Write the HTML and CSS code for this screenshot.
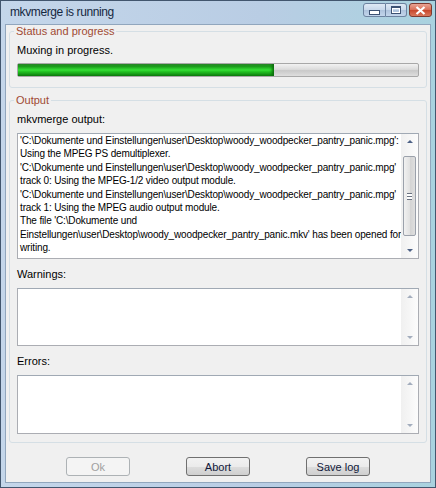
FILE: index.html
```html
<!DOCTYPE html>
<html>
	<head>
		<title>mkvmerge is running</title>
		<link rel="stylesheet" href="styles.css">
	</head>
	<body>
		<div class="window">
			<div class="titlebar">
				<span class="title">mkvmerge is running</span>
				<div class="captionBtns">
					<div class="capBtn minBtn"><span class="minGlyph"></span></div>
					<div class="capBtn maxBtn"><span class="maxGlyph"></span></div>
					<div class="capBtn closeBtn">
						<svg width="11" height="9" viewBox="0 0 11 9">
							<path d="M1.5 1 L9.5 8 M9.5 1 L1.5 8" stroke="#fff" stroke-width="2.2" fill="none"/>
						</svg>
					</div>
				</div>
			</div>
			<div class="client">
				<fieldset class="group groupStatus">
					<legend>Status and progress</legend>
					<div class="label">Muxing in progress.</div>
					<div class="progress"><div class="progressFill" style="width: 64%"></div></div>
				</fieldset>
				<fieldset class="group groupOutput">
					<legend>Output</legend>
					<div class="label">mkvmerge output:</div>
					<div class="textBox outputBox">
						<div class="textLines">
							<div>'C:\Dokumente und Einstellungen\user\Desktop\woody_woodpecker_pantry_panic.mpg':</div>
							<div>Using the MPEG PS demultiplexer.</div>
							<div>'C:\Dokumente und Einstellungen\user\Desktop\woody_woodpecker_pantry_panic.mpg'</div>
							<div>track 0: Using the MPEG-1/2 video output module.</div>
							<div>'C:\Dokumente und Einstellungen\user\Desktop\woody_woodpecker_pantry_panic.mpg'</div>
							<div>track 1: Using the MPEG audio output module.</div>
							<div>The file 'C:\Dokumente und</div>
							<div>Einstellungen\user\Desktop\woody_woodpecker_pantry_panic.mkv' has been opened for</div>
							<div>writing.</div>
						</div>
						<div class="scrollbar">
							<div class="arrow up"></div>
							<div class="thumb"><span class="grip"></span></div>
							<div class="arrow down"></div>
						</div>
					</div>
					<div class="label gapLabel">Warnings:</div>
					<div class="textBox smallBox">
						<div class="textLines"></div>
						<div class="scrollbar">
							<div class="arrow up faded"></div>
							<div class="arrow down faded"></div>
						</div>
					</div>
					<div class="label gapLabel">Errors:</div>
					<div class="textBox smallBox errorsBox">
						<div class="textLines"></div>
						<div class="scrollbar">
							<div class="arrow up faded"></div>
							<div class="arrow down faded"></div>
						</div>
					</div>
				</fieldset>
				<div class="buttonRow">
					<button class="btn" disabled>Ok</button>
					<button class="btn">Abort</button>
					<button class="btn">Save log</button>
				</div>
			</div>
		</div>
	</body>
</html>
```

FILE: styles.css
```css
body{
	margin: 0;
	background: #ffffff;
	font-family: "Liberation Sans", Arial, sans-serif;
	font-size: 11px;
	color: #000000;
}
.window{
	width: 436px;
	height: 488px;
	box-sizing: border-box;
	border: 1px solid #42566e;
	padding: 0 4px 4px 4px;
	background: linear-gradient(to right, #c4d6ea 0%, #b9cde4 60%, #a9d2df 100%);
	display: flex;
	flex-direction: column;
}
.titlebar{
	height: 23px;
	display: flex;
	align-items: flex-start;
	justify-content: space-between;
}
.title{
	margin-left: 5px;
	margin-top: 4px;
	font-size: 12px;
	letter-spacing: -0.4px;
	line-height: 15px;
	color: #14273f;
}
.captionBtns{
	display: flex;
	margin-top: 2px;
	margin-right: -1px;
}
.capBtn{
	height: 14px;
	box-sizing: border-box;
	border: 1px solid #6d83a0;
	display: flex;
	align-items: center;
	justify-content: center;
	background: linear-gradient(#dfe9f5 0%, #c7d7ea 50%, #aec3dd 51%, #c3d5eb 100%);
}
.minBtn{
	width: 23px;
	border-radius: 3px 0 0 3px;
}
.maxBtn{
	width: 21px;
	border-left: none;
	border-radius: 0 3px 3px 0;
}
.closeBtn{
	width: 23px;
	margin-left: 2px;
	border-color: #7d3a30;
	border-radius: 3px;
	background: linear-gradient(#e9a494 0%, #d86e56 50%, #c7452a 51%, #d9785c 100%);
}
.minGlyph{
	width: 9px;
	height: 3px;
	margin-top: 4px;
	background: #ffffff;
	border: 1px solid #3d5273;
}
.maxGlyph{
	width: 8px;
	height: 5px;
	border: 1px solid #3d5273;
	border-top-width: 2px;
	box-shadow: inset 0 0 0 1px #ffffff;
}
.client{
	flex: 1;
	background: #f0f0f0;
	border: 1px solid #91a6bd;
	display: flex;
	flex-direction: column;
}
.group{
	margin: 0 3px;
	padding: 6px 7px 10px 7px;
	border: 1px solid #d5dfe5;
	border-radius: 3px;
	min-width: 0;
}
.group legend{
	margin-left: -3px;
	padding: 0 2px;
	line-height: 13px;
	color: #a04a33;
}
.groupOutput{
	margin-top: 6px;
	padding: 6px 7px 8px 7px;
}
.label{
	line-height: 13px;
}
.gapLabel{
	margin-top: 9px;
}
.progress{
	margin-top: 6px;
	height: 14px;
	box-sizing: border-box;
	border: 1px solid #a8a8a8;
	border-radius: 2px;
	background: linear-gradient(#f2f2f2 0%, #dcdcdc 45%, #c9c9c9 55%, #dedede 100%);
	display: flex;
}
.progressFill{
	height: 100%;
	background: linear-gradient(#2f8a2f 0%, #1a9b1a 20%, #36e036 50%, #21c021 65%, #0e7a0e 100%);
	box-shadow: inset -3px 0 3px -1px #0b6b0b;
}
.textBox{
	margin-top: 7px;
	height: 126px;
	box-sizing: border-box;
	border: 1px solid #abadb3;
	border-top-color: #a0a9b4;
	background: #ffffff;
	display: flex;
}
.smallBox{
	height: 58px;
}
.errorsBox{
	height: 59px;
}
.textLines{
	flex: 1;
	padding: 0 2px;
	font-size: 10px;
	letter-spacing: -0.15px;
	line-height: 13.4px;
	white-space: nowrap;
	overflow: hidden;
}
.scrollbar{
	width: 17px;
	display: flex;
	flex-direction: column;
	align-items: center;
	justify-content: space-between;
	background: linear-gradient(to right, #f0f0f0, #fcfcfc);
}
.arrow{
	width: 0;
	height: 0;
	border-left: 3px solid transparent;
	border-right: 3px solid transparent;
	margin: 6px 0;
}
.up{
	border-bottom: 3px solid #4d6185;
}
.down{
	border-top: 3px solid #4d6185;
}
.faded.up{
	border-bottom-color: #a3adbd;
}
.faded.down{
	border-top-color: #a3adbd;
}
.thumb{
	width: 13px;
	height: 80px;
	box-sizing: border-box;
	border: 1px solid #9ba1ab;
	border-radius: 2px;
	background: linear-gradient(to right, #f1f1f1, #e2e2e2 50%, #d2d2d2 51%, #dfdfdf);
	display: flex;
	align-items: center;
	justify-content: center;
}
.grip{
	width: 5px;
	height: 5px;
	border-top: 1px solid #6a7281;
	border-bottom: 1px solid #6a7281;
	background: linear-gradient(#ffffff 40%, #6a7281 40%, #6a7281 60%, #ffffff 60%);
}
.buttonRow{
	margin-top: 14px;
	display: flex;
	justify-content: center;
	gap: 56px;
}
.btn{
	width: 64px;
	height: 19px;
	padding: 0;
	font-family: "Liberation Sans", Arial, sans-serif;
	font-size: 11px;
	color: #10183a;
	border: 1px solid #707070;
	border-radius: 3px;
	background: linear-gradient(#f2f2f2 0%, #ebebeb 50%, #dddddd 51%, #cfcfcf 100%);
}
.btn:disabled{
	color: #a0a0a0;
	border-color: #adb2b5;
	background: #f4f4f4;
}
```
